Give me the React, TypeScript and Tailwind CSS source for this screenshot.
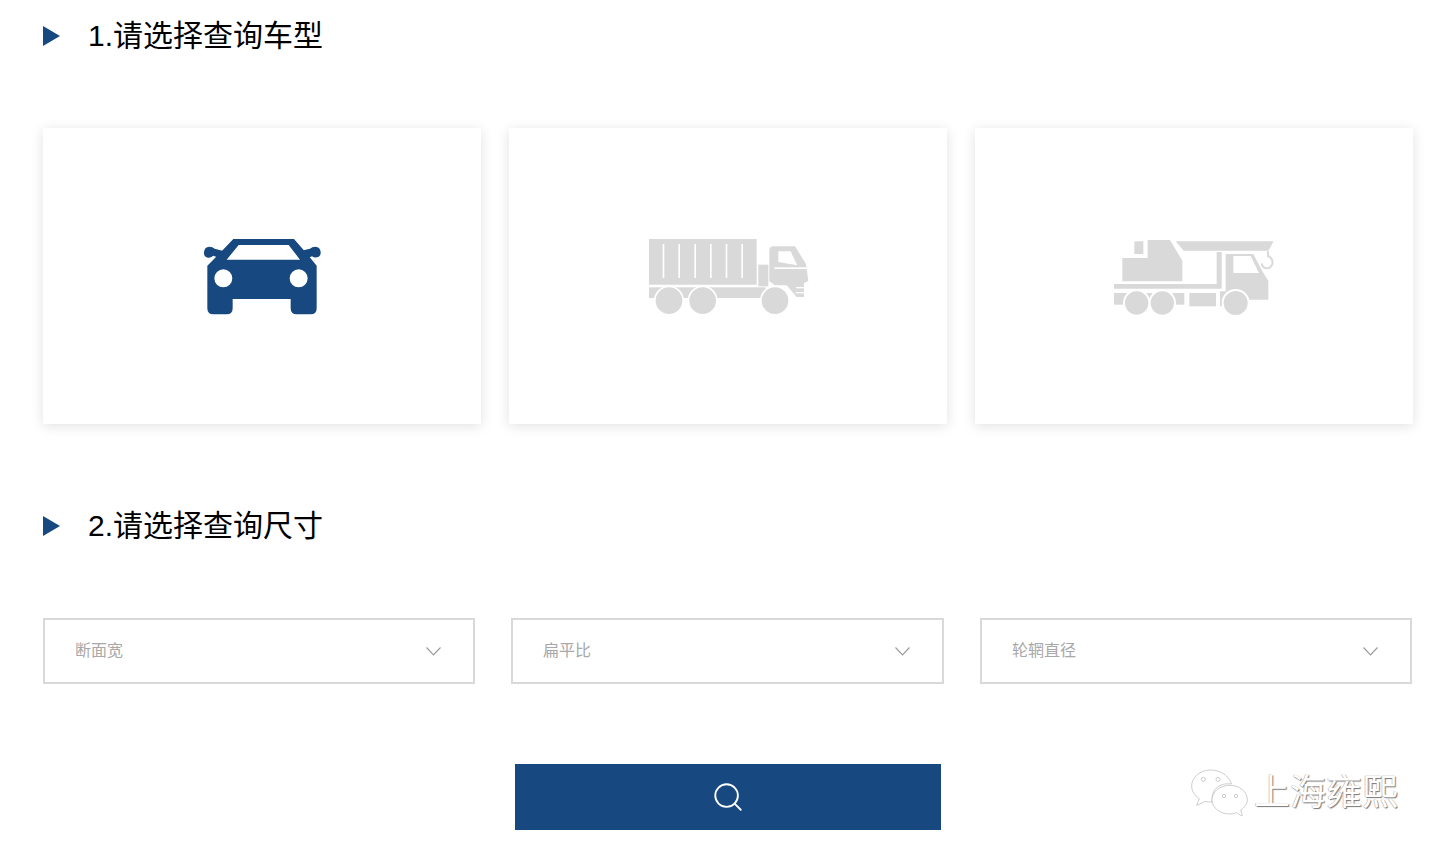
import React from 'react';
import { Search } from 'lucide-react';

const FONT = 'font-["Liberation_Sans","Noto_Sans_CJK_SC",sans-serif]';

const Heading: React.FC<{ text: string; className?: string }> = ({ text, className }) => (
  <div className={`flex h-[72px] items-center gap-[28px] ${className ?? ''}`}>
    <svg width="17" height="20" viewBox="0 0 17 20" className="shrink-0">
      <polygon points="0,0 17,10 0,20" fill="#17487f" />
    </svg>
    <h2 className="text-[30px] font-normal leading-none text-black">{text}</h2>
  </div>
);

const CarIcon = () => (
  <svg width="146" height="100" viewBox="-3 3 438 300">
    <path
      fillRule="evenodd"
      fill="#17487f"
      d="M130 42H312L352 88L380 122V250Q380 268 362 268H320Q302 268 302 250V222H128V250Q128 268 110 268H70Q52 268 52 250V122L84 90ZM146 60L110 104H330L296 60ZM100 133A27 27 0 1 0 100 187A27 27 0 1 0 100 133ZM326 133A27 27 0 1 0 326 187A27 27 0 1 0 326 133Z"
    />
    <path fill="#17487f" d="M58 65Q68 65 74 71L100 78L86 98L70 92Q62 99 54 98Q41 96 42 82Q43 66 58 65Z" />
    <path fill="#17487f" d="M376 65Q366 65 360 71L340 76L356 98L366 94Q374 99 380 97Q393 95 392 81Q391 66 376 65Z" />
  </svg>
);

const TruckIcon = () => (
  <svg width="176" height="96" viewBox="0 0 528 288">
    <g fill="#d9d9d9">
      <path
        fillRule="evenodd"
        d="M27 33H350V170H27ZM68 48V150H73V48ZM115 48V150H120V48ZM163 48V150H168V48ZM210 48V150H215V48ZM257 48V150H262V48ZM304 48V150H309V48Z"
      />
      <rect x="355" y="110" width="30" height="65" />
      <rect x="27" y="178" width="350" height="32" />
      <path
        fillRule="evenodd"
        d="M388 68Q388 55 400 55H465L498 108L505 158L492 166V207H470L440 172H405L388 160ZM415 70V102L472 112L452 70Z"
      />
    </g>
    <g fill="#fff">
      <rect x="403" y="118" width="102" height="5" />
      <rect x="468" y="177" width="26" height="4" />
      <rect x="468" y="192" width="26" height="4" />
      <circle cx="87" cy="218" r="45" />
      <circle cx="188" cy="218" r="45" />
      <circle cx="405" cy="218" r="45" />
    </g>
    <g fill="#d9d9d9">
      <circle cx="87" cy="218" r="40" />
      <circle cx="188" cy="218" r="40" />
      <circle cx="405" cy="218" r="40" />
    </g>
  </svg>
);

const CraneIcon = () => (
  <svg width="176" height="96" viewBox="3 0 528 288">
    <g fill="#d9d9d9">
      <rect x="88" y="40" width="27" height="38" />
      <path d="M128 36H195L232 98V160H52V90H128Z" />
      <path d="M212 40H506L490 68H236Z" />
      <path d="M27 168H335V72H350V182H27Z" />
      <path d="M27 195H70V230H27Z" />
      <rect x="120" y="195" width="30" height="20" />
      <rect x="200" y="195" width="38" height="35" />
      <rect x="253" y="195" width="80" height="40" />
      <path
        fillRule="evenodd"
        d="M362 78H445L472 130L490 158V215H420V235H345V190H362ZM385 84V135H462L437 84Z"
      />
    </g>
    <g fill="#fff">
      <circle cx="95" cy="225" r="41" />
      <circle cx="172" cy="225" r="41" />
      <circle cx="392" cy="225" r="42" />
    </g>
    <g fill="#d9d9d9">
      <circle cx="95" cy="225" r="35" />
      <circle cx="172" cy="225" r="35" />
      <circle cx="392" cy="225" r="36" />
    </g>
    <path d="M489 70V84Q505 92 502 108Q496 124 480 120Q471 116 470 106" fill="none" stroke="#d9d9d9" strokeWidth="6" />
  </svg>
);

const VehicleCard: React.FC<{ children: React.ReactNode }> = ({ children }) => (
  <div className="flex h-[296px] items-center justify-center bg-white shadow-[0_2px_12px_rgba(0,0,0,0.12)]">
    {children}
  </div>
);

const SelectBox: React.FC<{ label: string; className: string }> = ({ label, className }) => (
  <div className={`flex h-[66px] items-center justify-between border-2 border-[#d9d9d9] pl-[30px] pr-[32px] ${className}`}>
    <span className="text-base text-[#a8a8a8]">{label}</span>
    <svg width="15" height="9" viewBox="0 0 15 9" fill="none" stroke="#999999" strokeWidth="1.1">
      <polyline points="0.5,0.5 7.5,8 14.5,0.5" />
    </svg>
  </div>
);

const WeChatMark = () => (
  <svg width="60" height="50" viewBox="0 0 180 150" fill="#fff" stroke="#b5b5b5" strokeWidth="2">
    <path d="M62 12C30 12 5 34 5 60C5 76 14 88 28 98L20 118L46 106C52 108 58 108 66 108C64 66 90 50 124 54C118 30 92 12 62 12Z" />
    <path d="M120 58C88 58 66 78 66 102C66 126 90 144 120 144C128 144 134 142 140 140L158 152L152 132C164 124 172 114 172 102C172 78 150 58 120 58Z" />
    <circle cx="40" cy="40" r="6" />
    <circle cx="84" cy="40" r="6" />
    <circle cx="102" cy="90" r="5" />
    <circle cx="138" cy="90" r="5" />
  </svg>
);

export default function App() {
  return (
    <div className={`relative h-[856px] w-[1446px] overflow-hidden bg-white pl-[43px] pr-[33px] ${FONT}`}>
      <Heading text="1.请选择查询车型" />

      <div className="mt-[56px] grid grid-cols-3 gap-[28px]">
        <VehicleCard><CarIcon /></VehicleCard>
        <VehicleCard><TruckIcon /></VehicleCard>
        <VehicleCard><CraneIcon /></VehicleCard>
      </div>

      <Heading text="2.请选择查询尺寸" className="mt-[66px]" />

      <div className="mt-[56px] flex gap-[36px]">
        <SelectBox label="断面宽" className="w-[432px]" />
        <SelectBox label="扁平比" className="w-[433px]" />
        <SelectBox label="轮辋直径" className="w-[432px]" />
      </div>

      <div className="mt-[80px] flex justify-center">
        <button className="flex h-[66px] w-[426px] items-center justify-center bg-[#17487f] text-white">
          <Search size={34} strokeWidth={1.3} />
        </button>
      </div>

      <div className="absolute left-[1190px] top-[766px] flex items-center gap-[4px]">
        <WeChatMark />
        <span className="mt-[4px] text-[36px] leading-none text-white [text-shadow:1px_1px_1px_#777,-0.5px_-0.5px_0_#aaa]">
          上海雍熙
        </span>
      </div>
    </div>
  );
}
